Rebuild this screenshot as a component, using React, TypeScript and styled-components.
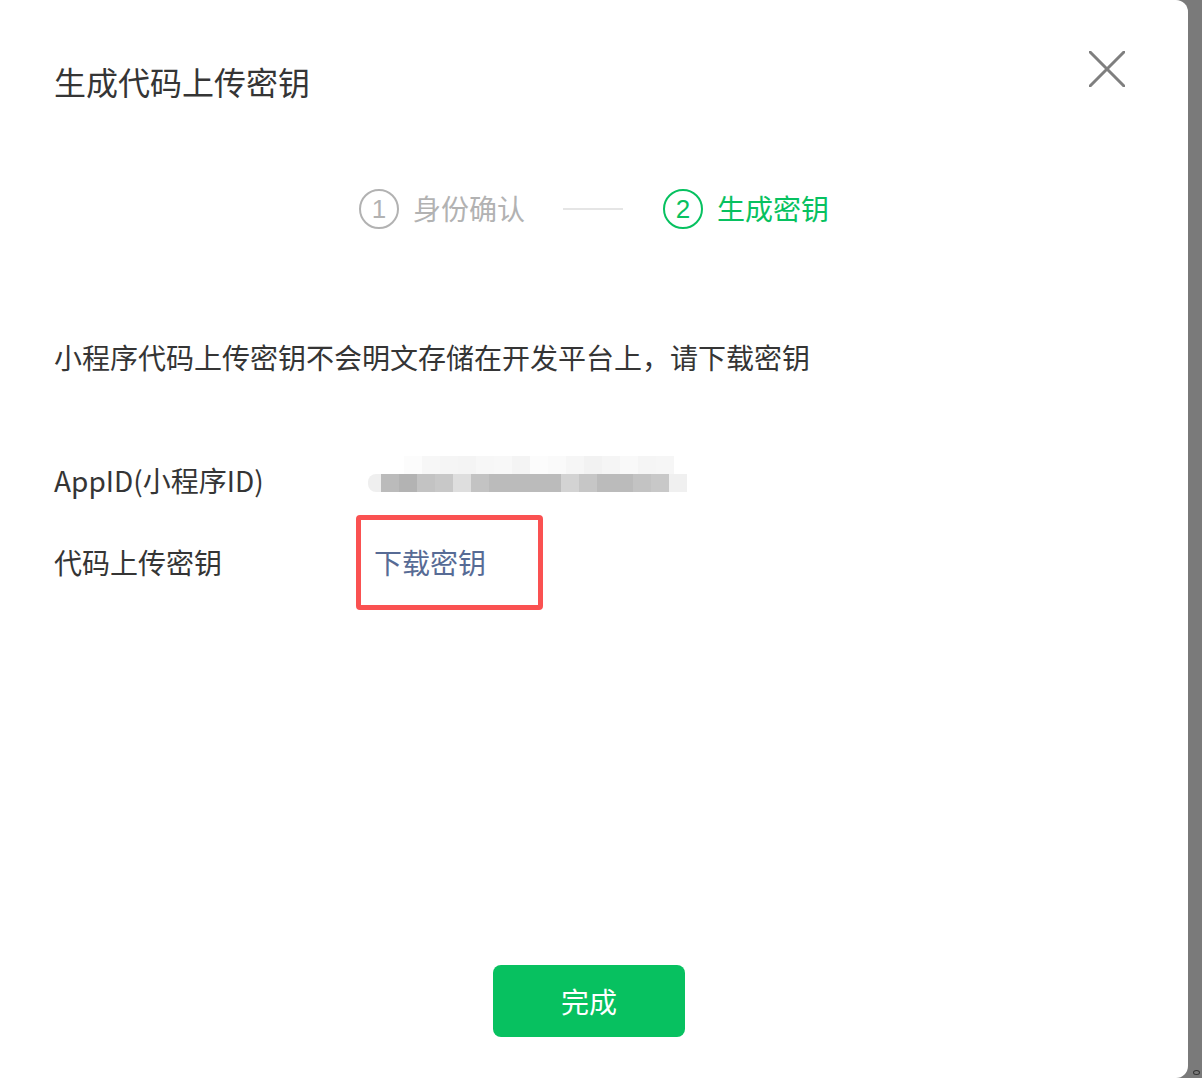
import styled, { createGlobalStyle } from "styled-components";

const GlobalStyle = createGlobalStyle`
  html, body {
    margin: 0;
    padding: 0;
  }
  body {
    font-family: "Noto Sans CJK SC", "Noto Sans", sans-serif;
    color: #353535;
  }
  * {
    box-sizing: border-box;
  }
`;

const mosaicTop = ["#fcfcfc", "#f7f7f7", "#f5f5f5", "#f4f4f4", "#f7f7f7", "#f8f8f8", "#f4f4f4", "#fcfcfc", "#fafafa", "#f6f6f6", "#f2f2f2", "#f5f5f5", "#f9f9f9", "#f5f5f5", "#f6f6f6"];
const mosaicBottom = ["#bbbbbb", "#b3b3b3", "#c3c3c3", "#c8c8c8", "#dedede", "#c3c3c3", "#bbbbbb", "#bbbbbb", "#bbbbbb", "#bbbbbb", "#d3d3d3", "#c6c6c6", "#bbbbbb", "#bbbbbb", "#c3c3c3", "#c8c8c8", "#f0f0f0"];

export default function App() {
  return (
    <>
      <GlobalStyle />
      <Screen>
        <Modal>
          <Header>
            <Title>生成代码上传密钥</Title>
            <CloseButton aria-label="关闭">
              <svg width="36" height="36" viewBox="0 0 36 36">
                <path d="M1 1 L35 35 M35 1 L1 35" stroke="#7f7f7f" strokeWidth="3" strokeLinecap="round" />
              </svg>
            </CloseButton>
          </Header>

          <Steps>
            <Step>
              <StepNumber>1</StepNumber>
              <StepLabel>身份确认</StepLabel>
            </Step>
            <StepLine />
            <Step $active>
              <StepNumber>2</StepNumber>
              <StepLabel>生成密钥</StepLabel>
            </Step>
          </Steps>

          <Description>小程序代码上传密钥不会明文存储在开发平台上，请下载密钥</Description>

          <Fields>
            <Field>
              <FieldLabel>AppID(小程序ID)</FieldLabel>
              <Mosaic>
                <MosaicRow $offset={36}>
                  {mosaicTop.map((c, i) => (
                    <MosaicCell key={i} style={{ background: c }} />
                  ))}
                </MosaicRow>
                <MosaicRow $offset={0}>
                  <MosaicEdge />
                  {mosaicBottom.map((c, i) => (
                    <MosaicCell key={i} style={{ background: c }} />
                  ))}
                </MosaicRow>
              </Mosaic>
            </Field>
            <Field>
              <FieldLabel>代码上传密钥</FieldLabel>
              <LinkWrap>
                <DownloadLink href="#">下载密钥</DownloadLink>
                <Highlight />
              </LinkWrap>
            </Field>
          </Fields>

          <Footer>
            <PrimaryButton>完成</PrimaryButton>
          </Footer>
        </Modal>
        <Backdrop>
          <CornerDot />
        </Backdrop>
      </Screen>
    </>
  );
}

const Screen = styled.div`
  display: flex;
  width: 1202px;
  height: 1078px;
  background: #7a7a7a;
  overflow: hidden;
`;

const Modal = styled.div`
  width: 1188px;
  height: 100%;
  background: #ffffff;
  border-radius: 0 12px 12px 0;
  display: flex;
  flex-direction: column;
`;

const Backdrop = styled.div`
  flex: 1;
  position: relative;
`;

const CornerDot = styled.div`
  position: absolute;
  right: 2px;
  bottom: 3px;
  width: 7px;
  height: 5px;
  border: 1.5px solid #333;
  border-radius: 50%;
`;

const Header = styled.div`
  display: flex;
  justify-content: space-between;
  align-items: flex-start;
  padding: 50px 63px 0 54px;
`;

const Title = styled.h1`
  margin: -2px 0 0;
  font-size: 32px;
  font-weight: 400;
  line-height: 66px;
  color: #353535;
`;

const CloseButton = styled.button`
  width: 36px;
  height: 36px;
  margin-top: 1px;
  padding: 0;
  border: none;
  background: transparent;
  cursor: pointer;
  display: flex;
`;

const Steps = styled.div`
  display: flex;
  align-items: center;
  justify-content: center;
  margin-top: 75px;
  height: 40px;
`;

const Step = styled.div<{ $active?: boolean }>`
  display: flex;
  align-items: center;
  gap: 14px;
  color: ${(p) => (p.$active ? "#07c160" : "#b2b2b2")};
`;

const StepNumber = styled.span`
  width: 40px;
  height: 40px;
  border: 2px solid currentColor;
  border-radius: 50%;
  display: flex;
  align-items: center;
  justify-content: center;
  font-size: 26px;
  line-height: 1;
  font-family: "Liberation Sans", "Noto Sans", sans-serif;
`;

const StepLabel = styled.span`
  font-size: 28px;
  line-height: 40px;
  margin-top: -2px;
`;

const StepLine = styled.div`
  width: 60px;
  height: 2px;
  background: #e5e5e5;
  margin: 0 40px 0 38px;
`;

const Description = styled.p`
  margin: 108px 0 0 54px;
  font-size: 28px;
  line-height: 40px;
  color: #353535;
`;

const Fields = styled.div`
  display: flex;
  flex-direction: column;
  gap: 42px;
  margin: 83px 0 0 54px;
`;

const Field = styled.div`
  display: flex;
  align-items: center;
  height: 40px;
`;

const FieldLabel = styled.span`
  width: 314px;
  font-size: 28px;
  line-height: 40px;
  color: #353535;
`;

const Mosaic = styled.div`
  display: flex;
  flex-direction: column;
  margin-top: -12px;
`;

const MosaicRow = styled.div<{ $offset: number }>`
  display: flex;
  height: 18px;
  padding-left: ${(p) => p.$offset}px;
`;

const MosaicEdge = styled.span`
  width: 13px;
  height: 18px;
  background: #efefef;
  border-radius: 8px 0 0 8px;
`;

const MosaicCell = styled.span`
  width: 18px;
  height: 18px;
`;

const LinkWrap = styled.div`
  position: relative;
  padding-left: 6px;
`;

const DownloadLink = styled.a`
  display: block;
  font-size: 28px;
  line-height: 40px;
  color: #576b95;
  text-decoration: none;
`;

const Highlight = styled.div`
  position: absolute;
  left: -12px;
  top: -27px;
  width: 187px;
  height: 95px;
  border: 5px solid #fa5151;
  border-radius: 4px;
  pointer-events: none;
`;

const Footer = styled.div`
  margin-top: auto;
  display: flex;
  justify-content: center;
  padding: 0 10px 41px 0;
`;

const PrimaryButton = styled.button`
  width: 192px;
  height: 72px;
  border: none;
  border-radius: 8px;
  background: #07c160;
  color: #ffffff;
  font-size: 28px;
  font-family: "Noto Sans CJK SC", "Noto Sans", sans-serif;
  cursor: pointer;
`;
